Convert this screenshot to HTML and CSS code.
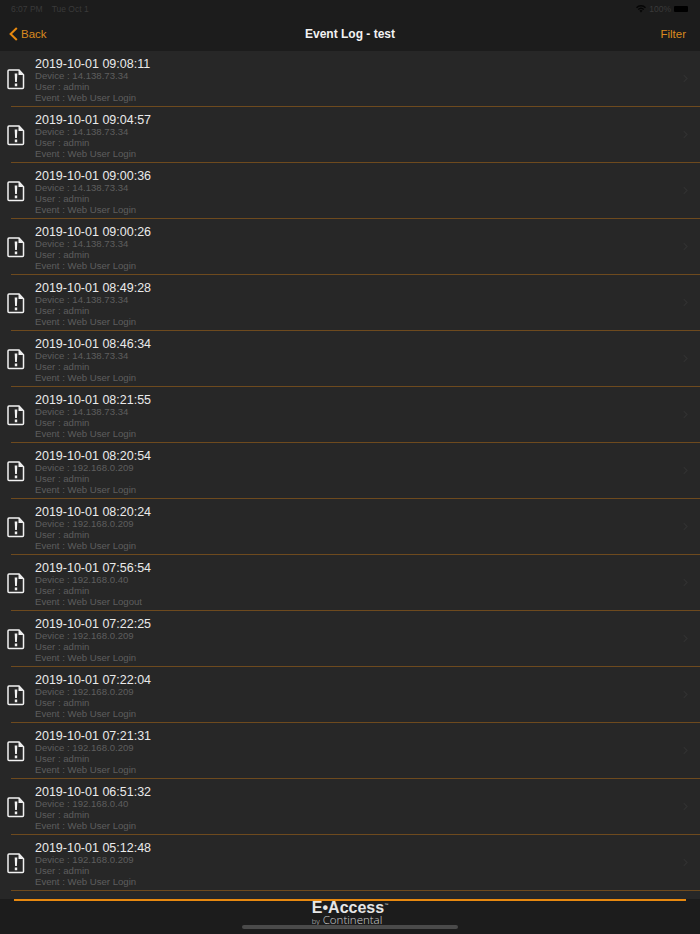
FILE: index.html
```html
<!DOCTYPE html>
<html lang="en">
<head>
<meta charset="utf-8">
<title>Event Log - test</title>
<link rel="stylesheet" href="styles.css">
</head>
<body>
<svg class="defs" width="0" height="0" aria-hidden="true">
  <symbol id="doc" viewBox="0 0 18 22">
    <path d="M2 2h10l4.500 4.800V19.500a1 1 0 0 1-1 1H2a1 1 0 0 1-1-1V3a1 1 0 0 1 1-1z" fill="none" stroke="#f2f2f2" stroke-width="1.500"/>
    <path d="M11.500 2l5 5h-5z" fill="#f2f2f2"/>
    <path d="M7.700 5.500h2.600l-.4 8.500H8.100zM7.800 15.500h2.400v2.700H7.800z" fill="#f2f2f2"/>
  </symbol>
  <symbol id="chev" viewBox="0 0 6 9">
    <path d="M1 .5 5 4.500 1 8.500" fill="none" stroke="#323232" stroke-width="1.300"/>
  </symbol>
</svg>
<div class="app">
  <header class="top">
    <div class="status">
      <div class="status-left"><span>6:07 PM</span><span>Tue Oct 1</span></div>
      <div class="status-right">
        <svg class="wifi" viewBox="0 0 14 10"><path d="M7 10 4.900 7.600a3 3 0 0 1 4.200 0zM3.700 6.400 2.500 5a6.600 6.600 0 0 1 9 0l-1.200 1.400a4.800 4.800 0 0 0-6.600 0zM1.400 3.800 0 2.400a10 10 0 0 1 14 0l-1.400 1.400a8.200 8.200 0 0 0-11.200 0z"/></svg>
        <span>100%</span>
        <span class="battery"></span>
      </div>
    </div>
    <nav class="nav">
      <a class="back"><svg class="back-icon" viewBox="0 0 9 14"><path d="M7.800 1 1.600 7l6.200 6" fill="none" stroke="#e8890f" stroke-width="2"/></svg><span>Back</span></a>
      <h1>Event Log - test</h1>
      <a class="filter">Filter</a>
    </nav>
  </header>
  <main class="list">
    <div class="row"><svg class="doc"><use href="#doc"/></svg><div class="info"><div class="when">2019-10-01 09:08:11</div><div class="meta">Device : 14.138.73.34</div><div class="meta">User : admin</div><div class="meta">Event : Web User Login</div></div><svg class="chev"><use href="#chev"/></svg></div>
    <div class="row"><svg class="doc"><use href="#doc"/></svg><div class="info"><div class="when">2019-10-01 09:04:57</div><div class="meta">Device : 14.138.73.34</div><div class="meta">User : admin</div><div class="meta">Event : Web User Login</div></div><svg class="chev"><use href="#chev"/></svg></div>
    <div class="row"><svg class="doc"><use href="#doc"/></svg><div class="info"><div class="when">2019-10-01 09:00:36</div><div class="meta">Device : 14.138.73.34</div><div class="meta">User : admin</div><div class="meta">Event : Web User Login</div></div><svg class="chev"><use href="#chev"/></svg></div>
    <div class="row"><svg class="doc"><use href="#doc"/></svg><div class="info"><div class="when">2019-10-01 09:00:26</div><div class="meta">Device : 14.138.73.34</div><div class="meta">User : admin</div><div class="meta">Event : Web User Login</div></div><svg class="chev"><use href="#chev"/></svg></div>
    <div class="row"><svg class="doc"><use href="#doc"/></svg><div class="info"><div class="when">2019-10-01 08:49:28</div><div class="meta">Device : 14.138.73.34</div><div class="meta">User : admin</div><div class="meta">Event : Web User Login</div></div><svg class="chev"><use href="#chev"/></svg></div>
    <div class="row"><svg class="doc"><use href="#doc"/></svg><div class="info"><div class="when">2019-10-01 08:46:34</div><div class="meta">Device : 14.138.73.34</div><div class="meta">User : admin</div><div class="meta">Event : Web User Login</div></div><svg class="chev"><use href="#chev"/></svg></div>
    <div class="row"><svg class="doc"><use href="#doc"/></svg><div class="info"><div class="when">2019-10-01 08:21:55</div><div class="meta">Device : 14.138.73.34</div><div class="meta">User : admin</div><div class="meta">Event : Web User Login</div></div><svg class="chev"><use href="#chev"/></svg></div>
    <div class="row"><svg class="doc"><use href="#doc"/></svg><div class="info"><div class="when">2019-10-01 08:20:54</div><div class="meta">Device : 192.168.0.209</div><div class="meta">User : admin</div><div class="meta">Event : Web User Login</div></div><svg class="chev"><use href="#chev"/></svg></div>
    <div class="row"><svg class="doc"><use href="#doc"/></svg><div class="info"><div class="when">2019-10-01 08:20:24</div><div class="meta">Device : 192.168.0.209</div><div class="meta">User : admin</div><div class="meta">Event : Web User Login</div></div><svg class="chev"><use href="#chev"/></svg></div>
    <div class="row"><svg class="doc"><use href="#doc"/></svg><div class="info"><div class="when">2019-10-01 07:56:54</div><div class="meta">Device : 192.168.0.40</div><div class="meta">User : admin</div><div class="meta">Event : Web User Logout</div></div><svg class="chev"><use href="#chev"/></svg></div>
    <div class="row"><svg class="doc"><use href="#doc"/></svg><div class="info"><div class="when">2019-10-01 07:22:25</div><div class="meta">Device : 192.168.0.209</div><div class="meta">User : admin</div><div class="meta">Event : Web User Login</div></div><svg class="chev"><use href="#chev"/></svg></div>
    <div class="row"><svg class="doc"><use href="#doc"/></svg><div class="info"><div class="when">2019-10-01 07:22:04</div><div class="meta">Device : 192.168.0.209</div><div class="meta">User : admin</div><div class="meta">Event : Web User Login</div></div><svg class="chev"><use href="#chev"/></svg></div>
    <div class="row"><svg class="doc"><use href="#doc"/></svg><div class="info"><div class="when">2019-10-01 07:21:31</div><div class="meta">Device : 192.168.0.209</div><div class="meta">User : admin</div><div class="meta">Event : Web User Login</div></div><svg class="chev"><use href="#chev"/></svg></div>
    <div class="row"><svg class="doc"><use href="#doc"/></svg><div class="info"><div class="when">2019-10-01 06:51:32</div><div class="meta">Device : 192.168.0.40</div><div class="meta">User : admin</div><div class="meta">Event : Web User Login</div></div><svg class="chev"><use href="#chev"/></svg></div>
    <div class="row"><svg class="doc"><use href="#doc"/></svg><div class="info"><div class="when">2019-10-01 05:12:48</div><div class="meta">Device : 192.168.0.209</div><div class="meta">User : admin</div><div class="meta">Event : Web User Login</div></div><svg class="chev"><use href="#chev"/></svg></div>
  </main>
  <footer class="foot">
    <div class="rule"></div>
    <div class="logo">
      <div class="logo-main">E•Access<sup>™</sup></div>
      <div class="logo-sub"><small>by</small> Continental</div>
    </div>
    <div class="home"></div>
  </footer>
</div>
</body>
</html>
```

FILE: styles.css
```css
* { box-sizing: border-box; }
html, body { margin: 0; padding: 0; background: #1c1c1c; }
body { font-family: "Liberation Sans", Arial, sans-serif; }
.defs { position: absolute; }
.app { width: 700px; height: 934px; display: flex; flex-direction: column; overflow: hidden; }
.top { height: 51px; flex: none; background: #1c1c1c; display: flex; flex-direction: column; }
.status { height: 16px; padding: 1px 12px 0 11px; display: flex; justify-content: space-between; align-items: center; font-size: 8.500px; color: #3a3a3a; }
.status-left { display: flex; gap: 9px; }
.status-right { display: flex; align-items: center; gap: 3px; }
.wifi { fill: #050505; width: 10px; height: 8px; }
.battery { width: 14px; height: 6px; background: #000; border-radius: 1px; }
.nav { flex: 1; display: grid; grid-template-columns: 1fr auto 1fr; align-items: center; padding: 1px 14px 0; }
.nav h1 { margin: 0; font-size: 12px; font-weight: 700; color: #f2f2f2; }
.back { display: flex; align-items: center; gap: 3px; margin-left: -5px; color: #d98a1f; font-size: 11.500px; }
.back-icon { width: 9px; height: 14px; }
.filter { justify-self: end; color: #d98a1f; font-size: 11.500px; }
.list { flex: 1; min-height: 0; overflow: hidden; background: #272727; }
.row { height: 56px; position: relative; display: flex; align-items: center; padding: 0 12px 1px 7px; }
.row::after { content: ""; position: absolute; left: 11px; right: 0; bottom: 0; height: 1px; background: #6e4a1e; }
.doc { flex: none; width: 18px; height: 22px; }
.info { flex: 1; align-self: flex-start; margin-left: 10px; padding-top: 6px; display: flex; flex-direction: column; }
.when { font-size: 12.500px; line-height: 14px; margin-bottom: -1px; color: #eaeaea; }
.meta { font-size: 9.600px; line-height: 11px; color: #5e5e5e; }
.chev { flex: none; width: 5px; height: 9px; }
.foot { height: 35px; flex: none; background: #1c1c1c; position: relative; display: flex; flex-direction: column; align-items: center; }
.rule { width: 672px; height: 2px; background: #e8890f; flex: none; }
.logo { color: #e6e6e6; margin-top: 1px; text-align: left; }
.logo-main { font-size: 16px; line-height: 12px; font-weight: 700; }
.logo-main sup { font-size: 4px; font-weight: 400; vertical-align: top; line-height: 6px; }
.logo-sub { font-size: 11.500px; line-height: 11px; font-family: "Open Sans", sans-serif; font-weight: 300; color: #cfcfcf; }
.logo-sub small { font-size: 7.500px; }
.home { position: absolute; left: 242px; bottom: 5px; width: 216px; height: 4px; border-radius: 2px; background: #4a4a4a; }
```
